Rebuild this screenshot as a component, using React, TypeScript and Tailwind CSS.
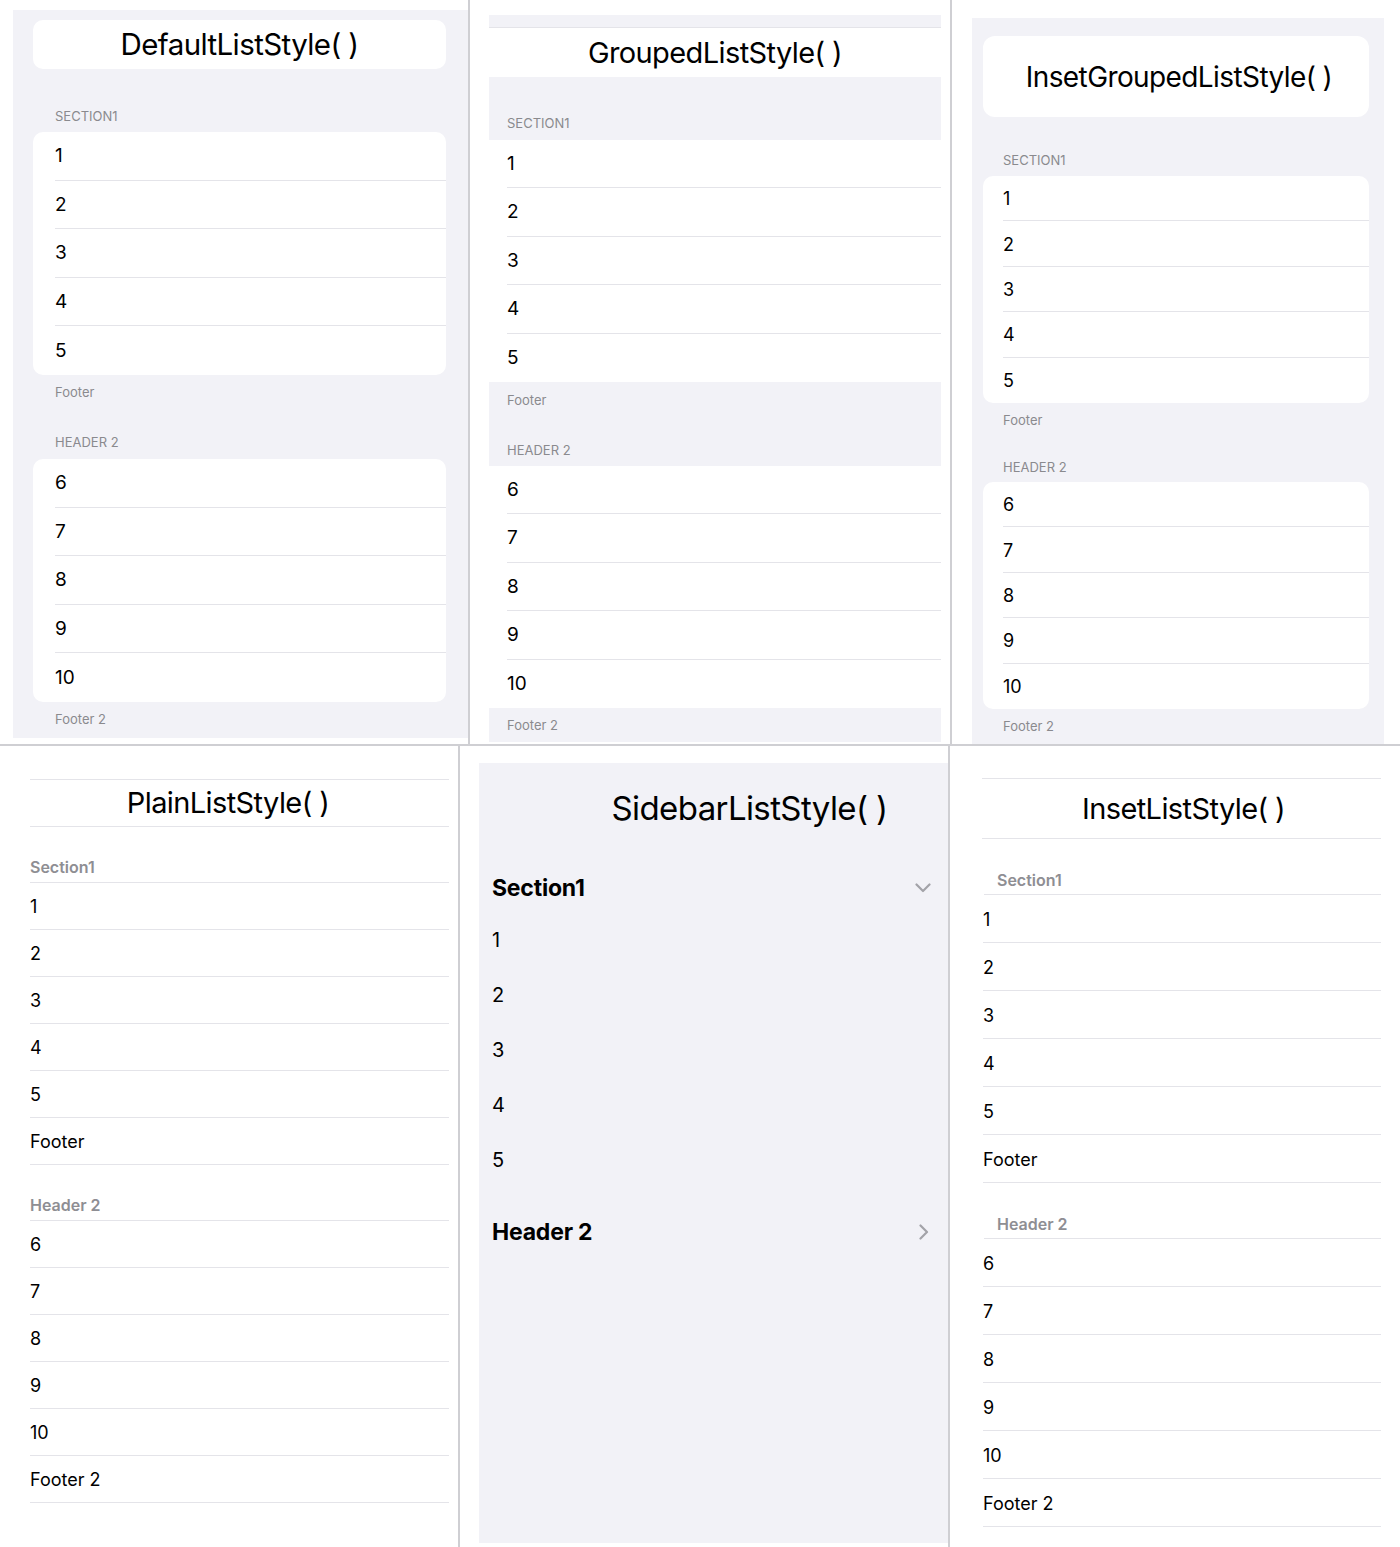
import React from "react";

const GRAY = "bg-[#f2f2f7]";

function Rows({ items, rowClass, lastLine }: { items: string[]; rowClass: string; lastLine?: boolean }) {
  return (
    <>
      {items.map((t, i) => (
        <div key={t} className={rowClass}>
          <div
            className={
              i < items.length - 1 || lastLine
                ? "h-full flex items-center pt-[1px] border-b border-[#e4e4e9]"
                : "h-full flex items-center pt-[1px]"
            }
          >
            {t}
          </div>
        </div>
      ))}
    </>
  );
}

function DefaultPanel() {
  return (
    <div className="w-[470px] shrink-0 border-r-2 border-[#cfcfd3] pl-[13px] pt-[10px]">
      <div className={`w-[455px] h-[728px] ${GRAY} pl-[20px] pr-[22px] pt-[10px]`}>
        <div className="h-[49px] rounded-[10px] bg-white flex items-center justify-center text-[29.5px] tracking-[-0.6px]">
          DefaultListStyle( )
        </div>
        <div className="mt-[39px] pl-[22px] text-[13px] leading-[16px] text-[#8a8a8e]">SECTION1</div>
        <div className="mt-[8px] rounded-[10px] bg-white text-[19px]">
          <Rows items={["1", "2", "3", "4", "5"]} rowClass="h-[48.6px] pl-[22px]" />
        </div>
        <div className="mt-[9px] pl-[22px] text-[13px] leading-[16px] text-[#8a8a8e]">Footer</div>
        <div className="mt-[34px] pl-[22px] text-[13px] leading-[16px] text-[#8a8a8e]">HEADER 2</div>
        <div className="mt-[9px] rounded-[10px] bg-white text-[19px]">
          <Rows items={["6", "7", "8", "9", "10"]} rowClass="h-[48.6px] pl-[22px]" />
        </div>
        <div className="mt-[9px] pl-[22px] text-[13px] leading-[16px] text-[#8a8a8e]">Footer 2</div>
      </div>
    </div>
  );
}

function GroupedPanel() {
  return (
    <div className="w-[482px] shrink-0 border-r-2 border-[#cfcfd3] pl-[19px] pr-[9px]">
      <div className="h-[15px]" />
      <div className={`h-[13px] ${GRAY} border-b border-[#e4e4e9]`} />
      <div className="h-[49px] flex items-center justify-center text-[29px] tracking-[-0.6px]">GroupedListStyle( )</div>
      <div className={`h-[63px] ${GRAY} pl-[18px] pt-[38px] text-[13px] leading-[16px] text-[#8a8a8e]`}>SECTION1</div>
      <div className="text-[19px]">
        <Rows items={["1", "2", "3", "4", "5"]} rowClass="h-[48.4px] pl-[18px]" />
      </div>
      <div className={`h-[84px] ${GRAY} pl-[18px] pt-[10px] text-[13px] leading-[16px] text-[#8a8a8e]`}>
        <div>Footer</div>
        <div className="mt-[34px]">HEADER 2</div>
      </div>
      <div className="text-[19px]">
        <Rows items={["6", "7", "8", "9", "10"]} rowClass="h-[48.4px] pl-[18px]" />
      </div>
      <div className={`h-[34px] ${GRAY} pl-[18px] pt-[9px] text-[13px] leading-[16px] text-[#8a8a8e]`}>Footer 2</div>
    </div>
  );
}

function InsetGroupedPanel() {
  return (
    <div className="flex-1 pl-[20px] pr-[16px] pt-[18px]">
      <div className={`h-full ${GRAY} pl-[11px] pr-[15px] pt-[18px]`}>
        <div className="h-[81px] rounded-[12px] bg-white flex items-center justify-center pl-[6px] text-[28px] tracking-[-0.6px]">
          InsetGroupedListStyle( )
        </div>
        <div className="mt-[35px] pl-[20px] text-[13px] leading-[16px] text-[#8a8a8e]">SECTION1</div>
        <div className="mt-[8px] rounded-[10px] bg-white text-[18px]">
          <Rows items={["1", "2", "3", "4", "5"]} rowClass="h-[45.4px] pl-[20px]" />
        </div>
        <div className="mt-[9px] pl-[20px] text-[13px] leading-[16px] text-[#8a8a8e]">Footer</div>
        <div className="mt-[31px] pl-[20px] text-[13px] leading-[16px] text-[#8a8a8e]">HEADER 2</div>
        <div className="mt-[7px] rounded-[10px] bg-white text-[18px]">
          <Rows items={["6", "7", "8", "9", "10"]} rowClass="h-[45.4px] pl-[20px]" />
        </div>
        <div className="mt-[9px] pl-[20px] text-[13px] leading-[16px] text-[#8a8a8e]">Footer 2</div>
      </div>
    </div>
  );
}

function PlainPanel() {
  return (
    <div className="w-[460px] shrink-0 border-r-2 border-[#cfcfd3] pl-[30px] pr-[9px] pt-[33px] text-[18px]">
      <div className="h-[48px] border-y border-[#e4e4e9] flex items-center justify-center pr-[23px] text-[29px] tracking-[-0.6px]">
        PlainListStyle( )
      </div>
      <div className="h-[56px] border-b border-[#e4e4e9] flex items-end pb-[5px] text-[16px] leading-[20px] font-semibold text-[#8e8e93]">
        Section1
      </div>
      <Rows items={["1", "2", "3", "4", "5", "Footer"]} rowClass="h-[47px]" lastLine />
      <div className="h-[56px] border-b border-[#e4e4e9] flex items-end pb-[5px] text-[16px] leading-[20px] font-semibold text-[#8e8e93]">
        Header 2
      </div>
      <Rows items={["6", "7", "8", "9", "10", "Footer 2"]} rowClass="h-[47px]" lastLine />
    </div>
  );
}

function ChevronDown() {
  return (
    <svg width="16" height="10" viewBox="0 0 16 10" fill="none">
      <path d="M1.5 1.5 L8 8 L14.5 1.5" stroke="#a3a3a8" strokeWidth="2.2" strokeLinecap="round" strokeLinejoin="round" />
    </svg>
  );
}

function ChevronRight() {
  return (
    <svg width="10" height="16" viewBox="0 0 10 16" fill="none">
      <path d="M1.5 1.5 L8 8 L1.5 14.5" stroke="#a3a3a8" strokeWidth="2.2" strokeLinecap="round" strokeLinejoin="round" />
    </svg>
  );
}

function SidebarPanel() {
  return (
    <div className="w-[490px] shrink-0 border-r-2 border-[#cfcfd3] pl-[19px] pt-[17px]">
      <div className={`h-[780px] ${GRAY}`}>
        <div className="pt-[25px] pl-[72px] flex justify-center text-[33px] leading-[40px] tracking-[-0.6px]">
          SidebarListStyle( )
        </div>
        <div className="mt-[40px] h-[40px] flex items-center justify-between pl-[13px] pr-[17px]">
          <span className="text-[23px] font-bold tracking-[-0.2px]">Section1</span>
          <ChevronDown />
        </div>
        <div className="mt-[4.5px] pl-[13px] text-[20px]">
          {["1", "2", "3", "4", "5"].map((t) => (
            <div key={t} className="h-[55px] flex items-center">
              {t}
            </div>
          ))}
        </div>
        <div className="mt-[24.5px] h-[40px] flex items-center justify-between pl-[13px] pr-[19px]">
          <span className="text-[23px] font-bold tracking-[-0.2px]">Header 2</span>
          <ChevronRight />
        </div>
      </div>
    </div>
  );
}

function InsetPanel() {
  return (
    <div className="flex-1 pl-[32px] pr-[19px] pt-[32px] text-[18px]">
      <div className="h-[61px] border-y border-[#e4e4e9] flex items-center justify-center pl-[4px] text-[29px] tracking-[-0.6px]">
        InsetListStyle( )
      </div>
      <div className="h-[56px] ml-[2px] border-b border-[#e4e4e9] flex items-end pb-[4px] pl-[13px] text-[16px] leading-[20px] font-semibold text-[#8e8e93]">
        Section1
      </div>
      <Rows items={["1", "2", "3", "4", "5", "Footer"]} rowClass="h-[48px] pl-[1px]" lastLine />
      <div className="h-[56px] ml-[2px] border-b border-[#e4e4e9] flex items-end pb-[4px] pl-[13px] text-[16px] leading-[20px] font-semibold text-[#8e8e93]">
        Header 2
      </div>
      <Rows items={["6", "7", "8", "9", "10", "Footer 2"]} rowClass="h-[48px] pl-[1px]" lastLine />
    </div>
  );
}

export default function App() {
  return (
    <div className="w-[1400px] h-[1547px] bg-white text-black flex flex-col overflow-hidden font-['Inter','Noto_Sans',sans-serif]">
      <div className="h-[746px] flex border-b-2 border-[#cfcfd3]">
        <DefaultPanel />
        <GroupedPanel />
        <InsetGroupedPanel />
      </div>
      <div className="flex-1 flex">
        <PlainPanel />
        <SidebarPanel />
        <InsetPanel />
      </div>
    </div>
  );
}
